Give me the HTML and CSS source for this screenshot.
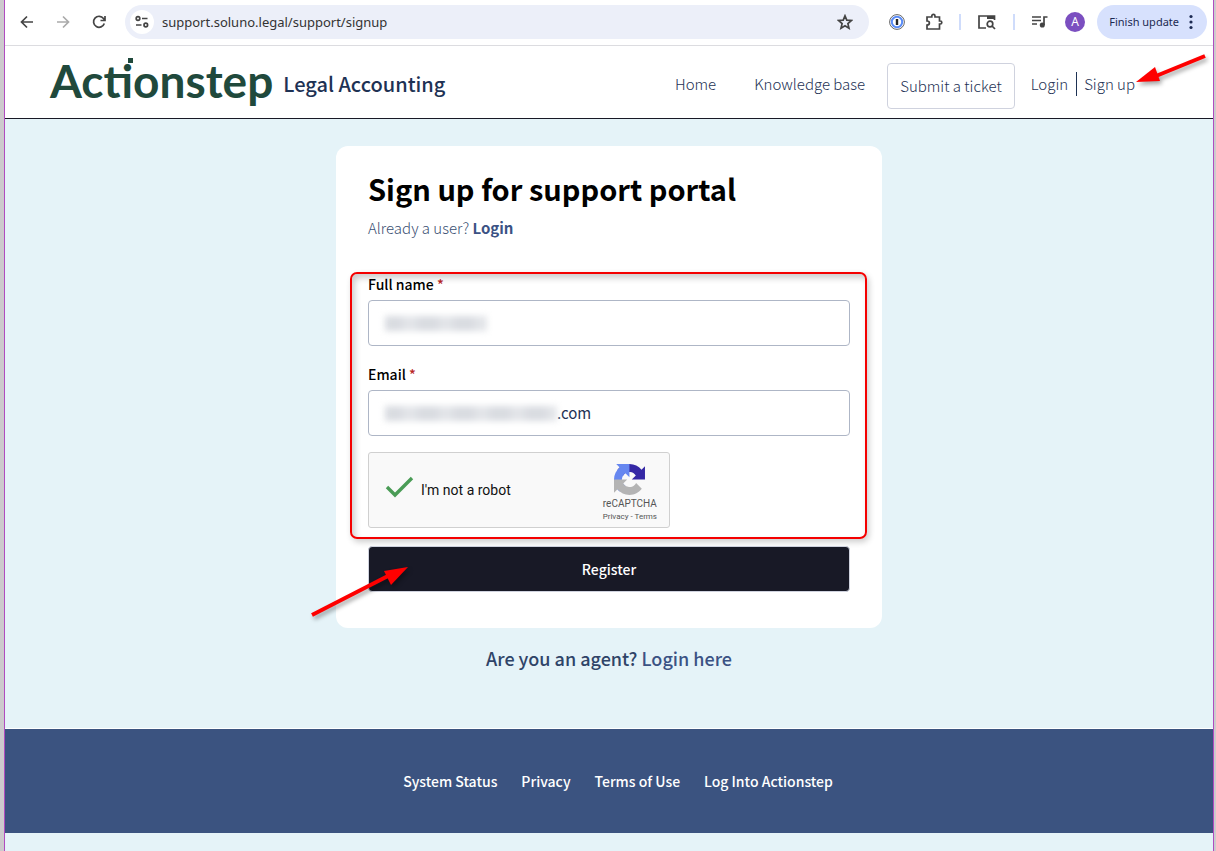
FILE: index.html
```html
<!DOCTYPE html>
<html lang="en">
<head>
<meta charset="utf-8">
<meta name="viewport" content="width=device-width, initial-scale=1">
<title>Sign up for support portal</title>
<link rel="stylesheet" href="styles.css">
</head>
<body>
<div class="window">
  <div class="toolbar">
    <button class="tool" aria-label="Back"><svg width="16" height="16" viewBox="0 0 16 16"><path d="M14 8H3M8 2.500 2.500 8 8 13.500"/></svg></button>
    <button class="tool tool-off" aria-label="Forward"><svg width="16" height="16" viewBox="0 0 16 16"><path d="M2 8h11M8 2.500 13.500 8 8 13.500"/></svg></button>
    <button class="tool" aria-label="Reload"><svg width="16" height="16" viewBox="0 0 16 16"><path d="M13.300 9.500A5.500 5.500 0 1 1 12.500 4.500L14 6.500M14 2v4.500H9.500"/></svg></button>
    <div class="address">
      <button class="site-info" aria-label="Site information"><svg width="16" height="16" viewBox="0 0 16 16"><circle cx="4" cy="4.500" r="1.800"/><path d="M8 4.500h5.500M2 11h5.500"/><circle cx="11.800" cy="11" r="1.800"/></svg></button>
      <input class="url" type="text" aria-label="Address" value="support.soluno.legal/support/signup">
      <button class="star" aria-label="Bookmark"><svg width="16" height="16" viewBox="0 0 16 16"><path d="M8 1.800l1.800 4.300 4.700.4-3.600 3.100 1.100 4.600L8 11.700l-4 2.500 1.100-4.600L1.500 6.500l4.700-.4z"/></svg></button>
    </div>
    <div class="extensions">
      <button class="tool password" aria-label="Password manager"><svg width="16" height="16" viewBox="0 0 16 16"><circle cx="8" cy="8" r="7.400" fill="#fff" stroke="#666" stroke-width="1"/><circle cx="8" cy="8" r="5.200" fill="#fff" stroke="#5a8cf8" stroke-width="2"/><path d="M8 5v6" stroke="#222" stroke-width="2.400"/></svg></button>
      <button class="tool" aria-label="Extensions"><svg width="18" height="18" viewBox="0 0 18 18"><path d="M2 4h4.800V3a1.600 1.600 0 0 1 3.200 0v1h4.500v4h.8a1.500 1.500 0 0 1 0 3h-.8v5H2v-4c3.200 0 3.200-4 0-4z"/></svg></button>
      <span class="rule"></span>
      <button class="tool" aria-label="Search tabs"><svg width="20" height="18" viewBox="0 0 20 18"><path d="M9 15H2V3h15.500v4"/><path d="M10 4.500h7.500" stroke-width="3"/><circle cx="13" cy="11" r="2.800"/><path d="M15 13l3 3"/></svg></button>
      <span class="rule"></span>
      <button class="tool" aria-label="Media controls"><svg width="18" height="16" viewBox="0 0 18 16"><path d="M1 3h9M1 6.500h9M1 10h5M13 11V3h3.500"/><circle cx="11.300" cy="11" r="1.700" fill="#444"/></svg></button>
      <button class="avatar" aria-label="Profile">A</button>
      <button class="update">Finish update <svg width="4" height="16" viewBox="0 0 4 16"><circle cx="2" cy="2.500" r="1.600"/><circle cx="2" cy="8" r="1.600"/><circle cx="2" cy="13.500" r="1.600"/></svg></button>
    </div>
  </div>

  <header class="header">
    <a class="brand" href="#"><span class="logo">Actionstep</span><span class="product">Legal Accounting</span></a>
    <nav class="nav">
      <a class="nav-link" href="#">Home</a>
      <a class="nav-link nav-kb" href="#">Knowledge base</a>
      <a class="ticket" href="#">Submit a ticket</a>
      <a class="nav-link login" href="#">Login</a>
      <a class="nav-link signup" href="#">Sign up<svg class="arrow arrow-signup" width="80" height="44" viewBox="0 0 80 44"><path d="M73 6 24 26" stroke="#fe0000" stroke-width="4"/><path d="M4 32 23 17 28 31z" fill="#fe0000"/></svg></a>
    </nav>
  </header>

  <main class="main">
    <form class="card">
      <h1>Sign up for support portal</h1>
      <p class="already">Already a user? <a href="#">Login</a></p>
      <div class="details">
        <label class="label" for="name">Full name <span>*</span></label>
        <div class="field"><span class="redacted redacted-name"></span><input id="name" type="text"></div>
        <label class="label" for="email">Email <span>*</span></label>
        <div class="field"><span class="redacted redacted-email"></span><input id="email" type="text" value=".com"></div>
        <div class="captcha">
          <label class="robot"><span class="tick"><input type="checkbox" checked><svg width="30" height="24" viewBox="0 0 30 24"><path d="M2 11l8 8L27 2" fill="none" stroke="#4a9c56" stroke-width="3.400"/></svg></span>I'm not a robot</label>
          <div class="captcha-brand">
            <svg width="31" height="31" viewBox="0 0 64 64">
              <path fill="#3528a5" d="M64 31.955l-.033-1.370V4.687l-7.160 7.160C50.948 4.674 42.033.093 32.050.093c-10.400 0-19.622 4.960-25.458 12.640l11.736 11.860a15.550 15.550 0 0 1 4.754-5.334c2.050-1.600 4.952-2.906 8.968-2.906.485 0 .860.057 1.135.163 4.976.393 9.288 3.140 11.828 7.124l-8.307 8.307L64 31.953"/>
              <path fill="#6687f0" d="M31.862.094l-1.370.033H4.594l7.160 7.160C4.580 13.147 0 22.060 0 32.046c0 10.400 4.960 19.622 12.640 25.458L24.500 45.768a15.550 15.550 0 0 1-5.334-4.754c-1.600-2.050-2.906-4.952-2.906-8.968 0-.485.057-.860.163-1.135.393-4.976 3.140-9.288 7.124-11.828l8.307 8.307L31.860.095"/>
              <path fill="#b4b4b4" d="M.001 32.045l.033 1.370v25.898l7.160-7.160c5.860 7.173 14.774 11.754 24.760 11.754 10.400 0 19.622-4.960 25.458-12.640l-11.736-11.860a15.550 15.550 0 0 1-4.754 5.334c-2.050 1.600-4.952 2.906-8.968 2.906-.485 0-.860-.057-1.135-.163-4.976-.393-9.288-3.140-11.828-7.124l8.307-8.307c-10.522.040-22.400.066-27.295-.005"/>
            </svg>
            <span class="captcha-name">reCAPTCHA</span>
            <span class="captcha-links"><a href="#">Privacy</a> - <a href="#">Terms</a></span>
          </div>
        </div>
      </div>
      <div class="submit">
        <button class="register" type="submit">Register</button>
        <svg class="arrow arrow-register" width="108" height="62" viewBox="0 0 108 62"><path d="M4 54 80 15" stroke="#fe0000" stroke-width="4"/><path d="M100 6 76 10 83 24z" fill="#fe0000"/></svg>
      </div>
    </form>
    <p class="agent">Are you an agent? <a href="#">Login here</a></p>
  </main>

  <footer class="footer">
    <a href="#">System Status</a>
    <a href="#">Privacy</a>
    <a href="#">Terms of Use</a>
    <a href="#">Log Into Actionstep</a>
  </footer>
</div>
</body>
</html>
```
FILE: styles.css
```css
* { box-sizing: border-box; }

body {
  margin: 0;
  min-height: 100vh;
  display: flex;
  padding: 0 2px 0 4px;
  background: #cdcacd;
  color: #1e3254;
  font: 15px/24px "Noto Sans CJK SC", "Noto Sans", sans-serif;
}

a { color: inherit; text-decoration: none; }
button, input { font: inherit; color: inherit; border: 0; padding: 0; background: none; }
h1, p { margin: 0; }

.window {
  flex: 1;
  min-width: 0;
  border: solid #b04cc0;
  border-width: 0 1px;
  background: #e5f3f8;
}

.toolbar {
  display: flex;
  align-items: center;
  gap: 20px;
  height: 46px;
  padding: 0 6px 2px 14px;
  background: #fff;
  border-bottom: 1px solid #dcdce0;
  font: 12px/16px "Noto Sans", sans-serif;
}
.tool, .star, .site-info { display: grid; place-items: center; }
.toolbar svg { fill: none; stroke: #444; stroke-width: 1.7; }
.tool-off { opacity: .45; }
.address {
  flex: 1;
  display: flex;
  align-items: center;
  height: 34px;
  margin-left: -2px;
  padding: 0 16px 0 5px;
  border-radius: 17px;
  background: #eceff9;
}
.site-info {
  width: 24px;
  height: 24px;
  border-radius: 50%;
  background: #fff;
}
.url {
  flex: 1;
  min-width: 0;
  padding-left: 8px;
  color: #333;
  font-size: 13px;
}
.extensions { display: flex; align-items: center; gap: 16px; }
.password { margin-right: 4px; }
.rule { width: 2px; height: 16px; background: #cfdcfb; }
.avatar {
  width: 20px;
  height: 20px;
  border-radius: 50%;
  background: #7b4fc0;
  color: #fff;
}
.update {
  display: flex;
  align-items: center;
  gap: 10px;
  height: 34px;
  margin-left: -4px;
  padding: 0 14px 0 12px;
  border-radius: 17px;
  background: #d7e1fd;
  color: #1c2a52;
  font-size: 11px;
  white-space: nowrap;
}
.toolbar .update svg { fill: #1c2a52; stroke: none; }

.header {
  display: flex;
  align-items: center;
  justify-content: space-between;
  height: 73px;
  padding: 8px 78px 0 45px;
  background: #fff;
  border-bottom: 1px solid #181926;
}
.brand { display: flex; align-items: center; gap: 10px; margin-bottom: 4px; }
.logo {
  position: relative;
  padding-bottom: 6px;
  color: #20493c;
  font: bold 46px/52px Lato, sans-serif;
}
.logo::after {
  content: "";
  position: absolute;
  left: 78px;
  top: 3px;
  width: 5px;
  height: 5px;
  background: #20493c;
}
.product { font-size: 20px; font-weight: 500; }
.nav { display: flex; align-items: center; font-weight: 300; }
.nav-link { margin-bottom: 4px; }
.nav-kb { margin-left: 38px; margin-right: 22px; }
.ticket {
  padding: 10px 12px;
  margin-right: 16px;
  border: 1px solid #cfd2de;
  border-radius: 4px;
}
.login { padding-right: 8px; border-right: 1px solid #1e3254; }
.signup { position: relative; padding-left: 7px; }
.arrow {
  position: absolute;
  filter: drop-shadow(2px 3px 2px rgb(0 0 0 / 35%));
}
.arrow-signup { left: 55px; top: -22px; }

.main { padding: 27px 16px 58px; }
.card {
  width: 100%;
  max-width: 546px;
  margin: 0 auto;
  padding: 22px 32px 36px;
  border-radius: 12px;
  background: #fff;
}
h1 { color: #000; font-size: 29px; line-height: 40px; font-weight: 700; }
.already { margin-top: 8px; color: #3a4f72; font-weight: 300; }
.already a { color: #3b5284; font-weight: 700; }
.details { position: relative; margin-top: 32px; }
.details::after {
  content: "";
  position: absolute;
  inset: 0 -17px -11px -18px;
  border: 2px solid #f40000;
  border-radius: 7px;
  box-shadow: 2px 3px 6px rgb(0 0 0 / 20%), inset 3px 4px 6px rgb(0 0 0 / 20%);
  pointer-events: none;
}
.label { display: block; color: #000; font-weight: 500; font-size: 14px; }
.label span { color: #b8271f; }
.field {
  display: flex;
  align-items: center;
  height: 46px;
  margin: 4px 0 16px;
  padding: 0 16px;
  border: 1px solid #aeb6c6;
  border-radius: 4px;
  background: #fff;
}
.field input { flex: 1; min-width: 0; }
.redacted {
  height: 15px;
  background: repeating-linear-gradient(90deg, #d9dce1 0 14px, #e3e5e9 22px 28px, #d9dce1 36px);
  filter: blur(3px);
}
.redacted-name { width: 102px; }
.redacted-email { width: 172px; }
.captcha {
  display: flex;
  justify-content: space-between;
  width: 302px;
  max-width: 100%;
  height: 76px;
  border: 1px solid #d0d0d0;
  border-radius: 3px;
  background: #f9f9f9;
  color: #111;
  font-family: Roboto, sans-serif;
}
.robot { display: flex; align-items: center; gap: 6px; padding-left: 16px; font-size: 14px; }
.tick { position: relative; width: 30px; height: 28px; }
.tick input { width: 30px; height: 28px; margin: 0; appearance: none; }
.tick svg { position: absolute; left: 0; top: 0; pointer-events: none; }
.captcha-brand {
  display: flex;
  flex-direction: column;
  align-items: center;
  padding: 11px 12px 0 0;
  color: #555;
}
.captcha-name { font-size: 10px; line-height: 18px; }
.captcha-links { font-size: 8px; line-height: 8px; }
.submit { position: relative; margin-top: 18px; }
.register {
  display: block;
  width: 100%;
  height: 46px;
  border: 1px solid #cfd2de;
  border-radius: 4px;
  background: #181926;
  color: #fff;
  font-size: 14px;
  font-weight: 500;
}
.arrow-register { left: -60px; top: 15px; }
.agent { margin-top: 18px; text-align: center; font-size: 18px; font-weight: 500; color: #2f4468; }
.agent a { color: #3b5284; }

.footer {
  display: flex;
  flex-wrap: wrap;
  align-items: center;
  justify-content: center;
  gap: 24px;
  min-height: 105px;
  padding: 0 0 0 18px;
  border-top: 1px solid #fff;
  background: #3b5380;
  color: #fff;
  font-size: 14px;
  font-weight: 500;
}
```
